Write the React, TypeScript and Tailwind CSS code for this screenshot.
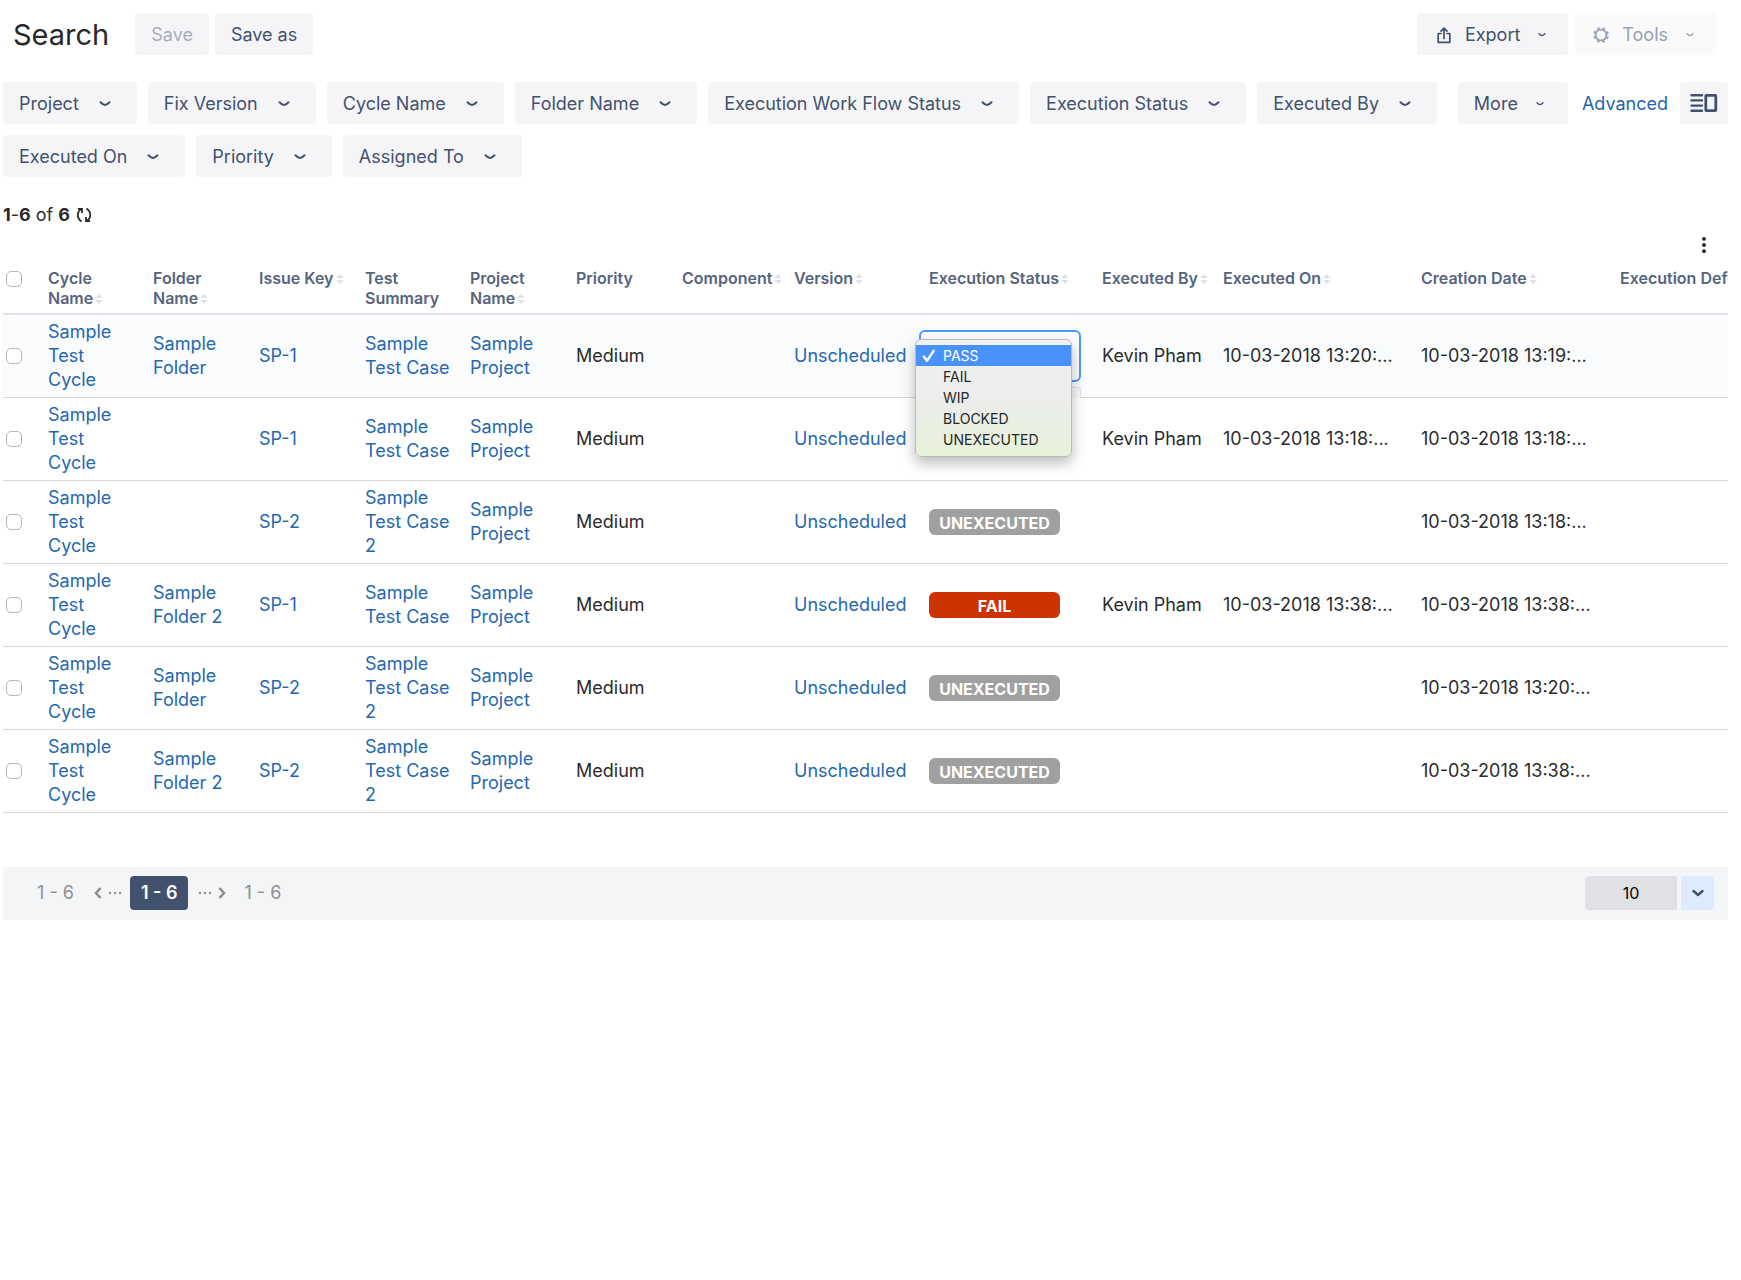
import clsx from "clsx";

const FILTERS = [
  "Project",
  "Fix Version",
  "Cycle Name",
  "Folder Name",
  "Execution Work Flow Status",
  "Execution Status",
  "Executed By",
  "Executed On",
  "Priority",
  "Assigned To",
];

const COLUMNS = [
  { label: "Cycle Name", width: "w-[105px]", sortable: true, wrap: true },
  { label: "Folder Name", width: "w-[106px]", sortable: true, wrap: true },
  { label: "Issue Key", width: "w-[106px]", sortable: true },
  { label: "Test Summary", width: "w-[105px]", wrap: true },
  { label: "Project Name", width: "w-[106px]", sortable: true, wrap: true },
  { label: "Priority", width: "w-[106px]" },
  { label: "Component", width: "w-[112px]", sortable: true },
  { label: "Version", width: "w-[135px]", sortable: true },
  { label: "Execution Status", width: "w-[173px]", sortable: true },
  { label: "Executed By", width: "w-[121px]", sortable: true },
  { label: "Executed On", width: "w-[198px]", sortable: true },
  { label: "Creation Date", width: "w-[199px]", sortable: true },
  { label: "Execution Defects", width: "" },
];

type Status = "PASS" | "FAIL" | "WIP" | "BLOCKED" | "UNEXECUTED";

interface Execution {
  id: number;
  folder: string;
  issueKey: string;
  summary: string;
  status?: Status;
  executedBy: string;
  executedOn: string;
  createdOn: string;
  editing?: boolean;
}

const STATUSES: Status[] = ["PASS", "FAIL", "WIP", "BLOCKED", "UNEXECUTED"];

const EXECUTIONS: Execution[] = [
  { id: 1, folder: "Sample Folder", issueKey: "SP-1", summary: "Sample Test Case", status: "PASS", executedBy: "Kevin Pham", executedOn: "10-03-2018 13:20:...", createdOn: "10-03-2018 13:19:...", editing: true },
  { id: 2, folder: "", issueKey: "SP-1", summary: "Sample Test Case", executedBy: "Kevin Pham", executedOn: "10-03-2018 13:18:...", createdOn: "10-03-2018 13:18:..." },
  { id: 3, folder: "", issueKey: "SP-2", summary: "Sample Test Case 2", status: "UNEXECUTED", executedBy: "", executedOn: "", createdOn: "10-03-2018 13:18:..." },
  { id: 4, folder: "Sample Folder 2", issueKey: "SP-1", summary: "Sample Test Case", status: "FAIL", executedBy: "Kevin Pham", executedOn: "10-03-2018 13:38:...", createdOn: "10-03-2018 13:38:..." },
  { id: 5, folder: "Sample Folder", issueKey: "SP-2", summary: "Sample Test Case 2", status: "UNEXECUTED", executedBy: "", executedOn: "", createdOn: "10-03-2018 13:20:..." },
  { id: 6, folder: "Sample Folder 2", issueKey: "SP-2", summary: "Sample Test Case 2", status: "UNEXECUTED", executedBy: "", executedOn: "", createdOn: "10-03-2018 13:38:..." },
];

const STATUS_COLORS: Record<Status, string> = {
  PASS: "bg-[#75b000]",
  FAIL: "bg-[#cc3300]",
  WIP: "bg-[#f2b000]",
  BLOCKED: "bg-[#6693b0]",
  UNEXECUTED: "bg-[#a0a0a0]",
};

function Chevron({ small }: { small?: boolean }) {
  return (
    <svg
      viewBox="0 0 12 12"
      className={clsx("shrink-0", small ? "size-2" : "size-3")}
      fill="none"
      stroke="currentColor"
      strokeWidth="2"
      strokeLinecap="round"
      strokeLinejoin="round"
      aria-hidden="true"
    >
      <path d="M1.5 4.2 Q4 6.8 6 7 Q8 6.8 10.5 4.2" />
    </svg>
  );
}

function SortIcon() {
  return (
    <svg viewBox="0 0 8 10" className="ml-0.5 inline-block h-2.5 w-2 align-baseline" fill="#dfe1e6" aria-hidden="true">
      <path d="M4 0 L7.8 4 H0.2 Z M4 10 L7.8 6 H0.2 Z" />
    </svg>
  );
}

function ExportIcon() {
  return (
    <svg viewBox="0 0 14 17" className="h-[17px] w-3.5" fill="none" stroke="currentColor" strokeWidth="1.7" strokeLinecap="round" strokeLinejoin="round" aria-hidden="true">
      <path d="M4 6.5 H1.2 V15.4 H12.8 V6.5 H10" />
      <path d="M7 11.6 V1.5 M4 4.1 L7 1.2 L10 4.1" />
    </svg>
  );
}

function GearIcon() {
  return (
    <svg viewBox="0 0 18 18" className="size-[18px]" fill="none" stroke="currentColor" aria-hidden="true">
      <circle cx="9" cy="9" r="5.4" strokeWidth="1.8" />
      <circle cx="9" cy="9" r="6.9" strokeWidth="2" strokeDasharray="2.4 3.02" strokeDashoffset="-1.51" />
    </svg>
  );
}

function LayoutIcon() {
  return (
    <svg viewBox="0 0 28 20" className="h-5 w-7" fill="none" stroke="currentColor" aria-hidden="true">
      <path d="M1.5 2.2 H12 M1.5 7.4 H12 M1.5 12.6 H12 M1.5 17.8 H12" strokeWidth="2.4" strokeLinecap="round" />
      <rect x="15.8" y="2.4" width="10" height="15.2" rx="0.5" strokeWidth="2.8" />
    </svg>
  );
}

function StatusEditor({ value }: { value: Status }) {
  return (
    <div className="relative h-[52px] w-[162px]">
      <select
        aria-label="Execution status"
        defaultValue={value}
        className="h-full w-full appearance-none rounded-md border-2 border-[#4c9aff] bg-[#fdfdfe] px-6 text-sm outline-none"
      >
        {STATUSES.map((status) => (
          <option key={status}>{status}</option>
        ))}
      </select>
      <div className="absolute top-[57px] right-0 h-[11px] w-8 rounded-tr border border-b-0 border-[#e0e2e7] bg-[#f7f8fa]" />
      <ul
        role="listbox"
        aria-label="Execution status options"
        className="absolute top-[9px] -left-1 z-10 w-[157px] rounded-md border border-[#b9bcb8] bg-linear-to-b from-[#f1f1f2] via-[#ededee] via-45% to-[#e6f2d9] pt-[5px] pb-1.5 text-sm text-[#262626] shadow-[0_6px_14px_rgba(0,0,0,0.28)]"
      >
        {STATUSES.map((status) => (
          <li
            key={status}
            role="option"
            aria-selected={status === value}
            className={clsx(
              "flex h-[21px] items-center pt-px pl-1.5",
              status === value && "bg-[#4992fc] text-white",
            )}
          >
            <span className="w-[21px]">
              {status === value && (
                <svg viewBox="0 0 14 14" className="size-3.5" fill="none" stroke="currentColor" strokeWidth="2.4" strokeLinecap="round" strokeLinejoin="round" aria-hidden="true">
                  <path d="M1.8 7.6 L5 11.8 L11.6 1.8" />
                </svg>
              )}
            </span>
            {status}
          </li>
        ))}
      </ul>
    </div>
  );
}

function RowCheckbox({ label }: { label: string }) {
  return (
    <input
      type="checkbox"
      aria-label={label}
      className="block size-4 appearance-none rounded-[5px] border border-[#b5b5b5] bg-white"
    />
  );
}

function TextLink({ children }: { children: string }) {
  return (
    <a href="#" className="text-[#2568b0]">
      {children}
    </a>
  );
}

function ExecutionsTable() {
  return (
    <div className="overflow-hidden">
      <table className="w-full table-fixed border-collapse text-left">
        <thead>
          <tr className="border-b-2 border-[#dfe1e6] align-top">
            <th className="w-[35px] pt-1 pl-[3px]">
              <RowCheckbox label="Select all" />
            </th>
            {COLUMNS.map((col) => (
              <th
                key={col.label}
                className={clsx(
                  "pt-px pb-[5px] pl-2.5 text-base leading-5 font-semibold text-[#56647e]",
                  col.width,
                  col.wrap ? "pr-3" : "whitespace-nowrap",
                )}
              >
                {col.label}
                {col.sortable && <SortIcon />}
              </th>
            ))}
          </tr>
        </thead>
        <tbody>
          {EXECUTIONS.map((row) => (
            <tr
              key={row.id}
              className={clsx("h-[83px] border-b border-[#d6d6d6]", row.editing && "bg-[#fafbfc]")}
            >
              <td className="pl-[3px]">
                <RowCheckbox label={`Select execution ${row.id}`} />
              </td>
              <td className="pr-5 pl-2.5"><TextLink>Sample Test Cycle</TextLink></td>
              <td className="pr-2 pl-2.5">{row.folder && <TextLink>{row.folder}</TextLink>}</td>
              <td className="pl-2.5"><TextLink>{row.issueKey}</TextLink></td>
              <td className="pl-2.5"><TextLink>{row.summary}</TextLink></td>
              <td className="pl-2.5"><TextLink>Sample Project</TextLink></td>
              <td className="pl-2.5">Medium</td>
              <td />
              <td className="pl-2.5"><TextLink>Unscheduled</TextLink></td>
              <td className={row.editing ? "p-0" : "pl-2.5"}>
                {row.status && row.editing && <StatusEditor value={row.status} />}
                {row.status && !row.editing && (
                  <span className={clsx("block h-[26px] w-[131px] rounded-md text-center text-base leading-7 font-bold text-white", STATUS_COLORS[row.status])}>
                    {row.status}
                  </span>
                )}
              </td>
              <td className="pl-2.5 whitespace-nowrap">{row.executedBy}</td>
              <td className="pl-2.5 whitespace-nowrap">{row.executedOn}</td>
              <td className="pl-2.5 whitespace-nowrap">{row.createdOn}</td>
              <td />
            </tr>
          ))}
        </tbody>
      </table>
    </div>
  );
}

function Dots() {
  return (
    <svg viewBox="0 0 14 4" className="h-1 w-3.5" fill="currentColor" aria-hidden="true">
      <circle cx="2" cy="2" r="1.2" />
      <circle cx="7" cy="2" r="1.2" />
      <circle cx="12" cy="2" r="1.2" />
    </svg>
  );
}

function Pagination() {
  return (
    <nav aria-label="Pagination" className="mt-[54px] flex h-[53px] items-center bg-[#f4f5f7] pr-3.5 pl-[34px] text-[#8f8f8f]">
      <span>1 - 6</span>
      <button aria-label="Previous page" className="ml-5 flex items-center gap-1.5">
        <svg viewBox="0 0 8 14" className="h-3.5 w-2" fill="none" stroke="currentColor" strokeWidth="2.6" aria-hidden="true">
          <path d="M6.5 2 L2 7 L6.5 12" />
        </svg>
        <Dots />
      </button>
      <button aria-current="page" className="ml-2 h-[34px] rounded bg-[#42526e] px-[11px] font-semibold text-white">
        1 - 6
      </button>
      <button aria-label="Next page" className="ml-2.5 flex items-center gap-1.5">
        <Dots />
        <svg viewBox="0 0 8 14" className="h-3.5 w-2" fill="none" stroke="currentColor" strokeWidth="2.6" aria-hidden="true">
          <path d="M1.5 2 L6 7 L1.5 12" />
        </svg>
      </button>
      <span className="ml-[18px]">1 - 6</span>
      <div className="ml-auto flex gap-1">
        <input
          aria-label="Rows per page"
          defaultValue="10"
          className="h-[34px] w-[92px] rounded-l bg-[#dfe1e5] text-center text-base text-black"
        />
        <button aria-label="Choose rows per page" className="flex h-[34px] w-[33px] items-center justify-center rounded-r bg-[#deebff] text-[#42526e]">
          <svg viewBox="0 0 12 12" className="size-3" fill="none" stroke="currentColor" strokeWidth="2.4" strokeLinecap="round" strokeLinejoin="round" aria-hidden="true">
            <path d="M1.5 4 L6 8 L10.5 4" />
          </svg>
        </button>
      </div>
    </nav>
  );
}

export default function App() {
  return (
    <div className="min-h-screen bg-white pr-[13px] pl-[3px] font-[Inter,'Liberation_Sans',sans-serif] text-lg leading-6 text-[#2b2b2b]">
      <header className="flex items-center pt-[13px] pr-3 pl-2.5 text-[#42526e]">
        <h1 className="mr-[26px] pt-0.5 text-[29px] text-[#292929]">Search</h1>
        <button disabled className="mr-1.5 h-[42px] rounded bg-[#f5f5f7] px-4 pt-0.5 text-[#a5adba]">Save</button>
        <button className="h-[42px] rounded bg-[#f5f5f7] px-4 pt-0.5">Save as</button>
        <button className="ml-auto flex h-[42px] items-center rounded bg-[#f5f5f7] pt-0.5 pr-[22px] pl-5">
          <ExportIcon />
          <span className="mr-[18px] ml-3.5">Export</span>
          <Chevron small />
        </button>
        <button disabled className="ml-[7px] flex h-[42px] items-center rounded bg-[#fafafb] pt-0.5 pr-[22px] pl-[17px] text-[#97a0af]">
          <GearIcon />
          <span className="mr-[18px] ml-3">Tools</span>
          <Chevron small />
        </button>
      </header>

      <section aria-label="Filters" className="mt-[27px] flex items-start text-[#42526e]">
        <div className="flex flex-1 flex-wrap gap-[11px]">
          {FILTERS.map((name) => (
            <button key={name} className="flex h-[42px] items-center rounded bg-[#f5f5f7] pt-0.5 pr-[26px] pl-4">
              <span className="mr-5">{name}</span>
              <Chevron />
            </button>
          ))}
        </div>
        <button className="flex h-[42px] items-center rounded bg-[#f5f5f7] pt-0.5 pr-6 pl-4">
          <span className="mr-[18px]">More</span>
          <Chevron small />
        </button>
        <a href="#" className="mr-3 ml-3.5 flex h-[42px] items-center pt-0.5 text-[#1f66b0]">Advanced</a>
        <button aria-label="Toggle layout" className="flex h-[42px] w-12 items-center justify-center rounded bg-[#f5f5f7]">
          <LayoutIcon />
        </button>
      </section>

      <div className="mt-[26px] flex items-center">
        <p>
          <b>1</b>-<b>6</b> of <b>6</b>
        </p>
        <button aria-label="Refresh" className="ml-1.5">
          <svg viewBox="0 0 16 16" className="size-4" fill="none" stroke="currentColor" strokeWidth="1.8" aria-hidden="true">
            <path d="M5.5 14.5 C0.5 11 0.5 5 5.5 2 M1.8 1.8 H6 V6" />
            <path d="M10.5 1.5 C15.5 5 15.5 11 10.5 14 M14.2 14.2 H10 V10" />
          </svg>
        </button>
      </div>

      <div className="mt-[9px] mb-[13px] flex justify-end pr-5">
        <button aria-label="Table options">
          <svg viewBox="0 0 8 18" className="h-[18px] w-2" fill="#222" aria-hidden="true">
            <circle cx="4" cy="2.8" r="1.9" />
            <circle cx="4" cy="9" r="1.9" />
            <circle cx="4" cy="15.2" r="1.9" />
          </svg>
        </button>
      </div>

      <ExecutionsTable />
      <Pagination />
    </div>
  );
}
